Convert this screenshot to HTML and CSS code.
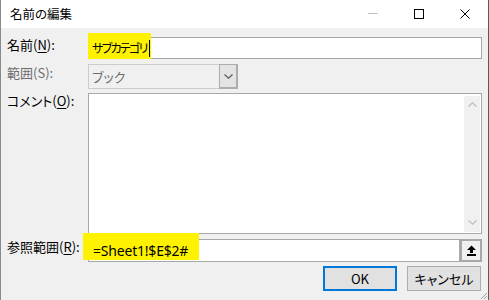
FILE: index.html
```html
<!DOCTYPE html>
<html lang="ja">
<head>
  <meta charset="UTF-8" />
  <title>名前の編集</title>
  <link rel="stylesheet" href="styles.css">
</head>
<body>

  <div class="window">

    <div class="titlebar">
      <span class="title">名前の編集</span>
      <div class="caption">
        <svg class="cap-btn" width="10" height="10" viewBox="0 0 10 10"><path d="M0 4.5H10" stroke="#c2c2c2" stroke-width="1"/></svg>
        <svg class="cap-btn" width="10" height="10" viewBox="0 0 10 10"><rect x="0.5" y="0.5" width="9" height="9" fill="none" stroke="#000" stroke-width="1"/></svg>
        <svg class="cap-btn" width="10" height="10" viewBox="0 0 10 10"><path d="M0.5 0.5L9.5 9.5M9.5 0.5L0.5 9.5" stroke="#000" stroke-width="1"/></svg>
      </div>
    </div>

    <div class="content">

      <div class="row row-name">
        <label class="label">名前(<u>N</u>):</label>
        <div class="textbox">
          <span class="value value-name">サブカテゴリ</span><span class="caret"></span>
        </div>
        <span class="mark mark-name"></span>
      </div>

      <div class="row row-scope">
        <label class="label label-off">範囲(S):</label>
        <div class="combo">
          <span class="combo-text">ブック</span>
          <span class="combo-btn">
            <svg width="9" height="5" viewBox="0 0 9 5"><path d="M0.5 0.5L4.5 4.2L8.5 0.5" fill="none" stroke="#5a5a5a" stroke-width="1.2"/></svg>
          </span>
        </div>
      </div>

      <div class="row row-comment">
        <label class="label">コメント(<u>O</u>):</label>
        <div class="memo">
          <div class="vscroll">
            <svg width="9" height="5" viewBox="0 0 9 5"><path d="M0.5 4.5L4.5 0.8L8.5 4.5" fill="none" stroke="#c4c4c4" stroke-width="1.5"/></svg>
            <svg width="9" height="5" viewBox="0 0 9 5"><path d="M0.5 0.5L4.5 4.2L8.5 0.5" fill="none" stroke="#c4c4c4" stroke-width="1.5"/></svg>
          </div>
        </div>
      </div>

      <div class="row row-ref">
        <label class="label">参照範囲(<u>R</u>):</label>
        <div class="ref">
          <div class="textbox ref-box">
            <span class="value value-ref">=Sheet1!$E$2#</span>
          </div>
          <button class="collapse">
            <svg width="11" height="11" viewBox="0 0 11 11"><path d="M5.5 0.5L10 5H7V8H4V5H1Z" fill="#000"/><rect x="1" y="9" width="9" height="2" fill="#000"/></svg>
          </button>
        </div>
        <span class="mark mark-ref"></span>
      </div>

      <div class="actions">
        <button class="btn btn-default">OK</button>
        <button class="btn">キャンセル</button>
      </div>

      <svg class="grip" width="8" height="8" viewBox="0 0 8 8">
        <path d="M7 1L1 7M7 4L4 7M7 7L7 7" stroke="#a0a0a0" stroke-width="1"/>
      </svg>
    </div>

  </div>

</body>
</html>
```

FILE: styles.css
```css
body {
  margin: 0;
  background: #fff;
  font-family: "Noto Sans", "Noto Sans CJK JP", sans-serif;
  font-feature-settings: "palt";
  color: #000;
}

.window {
  width: 489px;
  height: 300px;
  box-sizing: border-box;
  border-left: 1px solid #8a8a8a;
  border-right: 1px solid #5a5a5a;
  display: flex;
  flex-direction: column;
  overflow: hidden;
}

/* title bar */

.titlebar {
  height: 28px;
  flex: none;
  display: flex;
  align-items: center;
  justify-content: space-between;
  background: #fff;
  padding-left: 9px;
}

.title {
  font-size: 12.5px;
  line-height: 16px;
  font-family: "Noto Sans CJK JP", sans-serif;
}

.caption {
  display: flex;
  align-items: center;
  gap: 36px;
  padding-right: 18px;
}

.cap-btn {
  display: block;
}

/* dialog body */

.content {
  position: relative;
  flex: 1;
  background: #f0f0f0;
  padding: 9px 6px 0 6px;
  display: flex;
  flex-direction: column;
}

.row {
  position: relative;
  display: flex;
}

.row-scope { margin-top: 5px; }
.row-comment { margin-top: 4px; }
.row-ref { margin-top: 5px; }

.label {
  width: 81px;
  flex: none;
  font-size: 13px;
  line-height: 16px;
  font-family: "Noto Sans CJK JP", sans-serif;
}

.label u {
  text-underline-offset: 2px;
}

.label-off {
  color: #6d6d6d;
  padding-top: 1px;
}

.textbox {
  flex: 1;
  height: 22px;
  box-sizing: border-box;
  border: 1px solid #a8a8a8;
  background: #fff;
  display: flex;
  align-items: center;
  padding-left: 3px;
}

.value {
  position: relative;
  z-index: 2;
  font-size: 13px;
  line-height: 16px;
  font-family: "Noto Sans CJK JP", sans-serif;
}

.value-name {
  font-size: 12px;
  letter-spacing: -1.7px;
}

.caret {
  position: relative;
  z-index: 2;
  width: 1px;
  height: 17px;
  margin-left: 2px;
  background: #000;
}

/* yellow highlighter marks */

.mark {
  position: absolute;
  z-index: 1;
  background: #fff200;
}

.mark-name {
  left: 81px;
  top: -4px;
  width: 63px;
  height: 26px;
}

.mark-ref {
  left: 76px;
  top: -6px;
  width: 116px;
  height: 27px;
}

/* combo */

.combo {
  width: 150px;
  height: 25px;
  box-sizing: border-box;
  border: 1px solid #cccccc;
  background: #f0f0f0;
  display: flex;
}

.combo-text {
  flex: 1;
  color: #6d6d6d;
  font-size: 13px;
  line-height: 23px;
  padding-left: 3px;
  font-family: "Noto Sans CJK JP", sans-serif;
}

.combo-btn {
  width: 16px;
  margin: -1px -1px -1px 0;
  border: 1px solid #adadad;
  border-width: 1px 2px 2px 1px;
  background: #e3e3e3;
  display: flex;
  align-items: center;
  justify-content: center;
}

/* comment box */

.memo {
  flex: 1;
  height: 141px;
  box-sizing: border-box;
  border: 1px solid #a8a8a8;
  background: #fff;
  display: flex;
  justify-content: flex-end;
  padding: 2px 1px 1px 0;
}

.vscroll {
  width: 16px;
  background: #f0f0f0;
  display: flex;
  flex-direction: column;
  justify-content: space-between;
  align-items: center;
  padding: 6px 0 7px;
  box-sizing: border-box;
}

.vscroll svg {
  display: block;
}

/* reference range */

.ref {
  flex: 1;
  display: flex;
}

.ref-box {
  height: 23px;
  padding-left: 4px;
}

.value-ref {
  font-family: "Noto Sans", sans-serif;
  font-size: 14px;
  letter-spacing: -0.2px;
}

.collapse {
  width: 22px;
  height: 23px;
  box-sizing: border-box;
  border: 2px solid #a9a9a9;
  background: #f0f0f0;
  padding: 0;
  display: flex;
  align-items: center;
  justify-content: center;
}

/* buttons */

.actions {
  margin-top: 4px;
  display: flex;
  justify-content: flex-end;
  gap: 10px;
  padding-right: 1px;
}

.btn {
  width: 74px;
  height: 25px;
  box-sizing: border-box;
  border: 1px solid #adadad;
  background: #e1e1e1;
  font-family: "Noto Sans CJK JP", sans-serif;
  font-feature-settings: "palt";
  font-size: 13px;
  line-height: 16px;
  padding: 0;
  color: #000;
}

.btn-default {
  border: 2px solid #0078d7;
}

.grip {
  position: absolute;
  right: 0;
  bottom: 0;
}
```
